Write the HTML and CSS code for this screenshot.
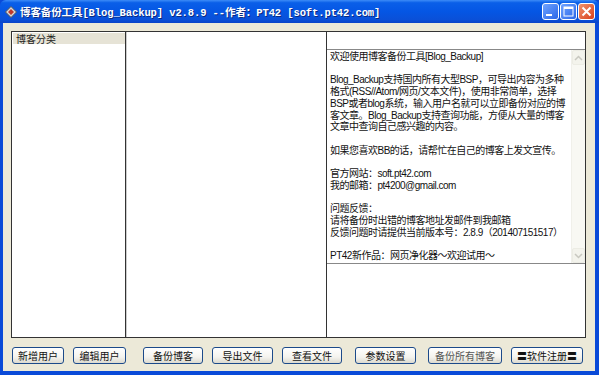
FILE: index.html
```html
<!DOCTYPE html>
<html>
<head>
<meta charset="utf-8">
<link rel="stylesheet" href="styles.css">
</head>
<body>
<div class="window">
  <div class="titlebar">
    <svg class="appicon" width="12" height="12" viewBox="0 0 12 12">
      <polygon points="6,0.5 11.5,6 6,11.5 0.5,6" fill="#d8d8d8" stroke="#555" stroke-width="1"/>
      <polygon points="6,3 9,6 6,9 3,6" fill="#c0392b"/>
    </svg>
    <span class="title">博客备份工具[Blog_Backup] v2.8.9 --作者：PT42 [soft.pt42.com]</span>
    <div class="ctrls">
      <div class="cbtn"><svg width="17" height="17" viewBox="0 0 17 17"><rect x="4" y="11" width="6" height="2" fill="#fff"/></svg></div>
      <div class="cbtn"><svg width="17" height="17" viewBox="0 0 17 17"><rect x="4" y="4" width="9" height="9" fill="none" stroke="#fff" stroke-width="1"/><rect x="4" y="4" width="9" height="2" fill="#fff"/></svg></div>
      <div class="cbtn close"><svg width="17" height="17" viewBox="0 0 17 17"><path d="M4.5 4.5 L12.5 12.5 M12.5 4.5 L4.5 12.5" stroke="#fff" stroke-width="2"/></svg></div>
    </div>
  </div>
  <div class="client">
    <div class="panels">
      <div class="col left">
        <div class="listhead">博客分类</div>
      </div>
      <div class="col mid"></div>
      <div class="col right">
        <div class="rtop"></div>
        <div class="memo">
          <div class="memotext">欢迎使用博客备份工具[Blog_Backup]<br><br>Blog_Backup支持国内所有大型BSP，可导出内容为多种<br>格式(RSS//Atom/网页/文本文件)，使用非常简单，选择<br>BSP或者blog系统，输入用户名就可以立即备份对应的博<br>客文章。Blog_Backup支持查询功能，方便从大量的博客<br>文章中查询自己感兴趣的内容。<br><br>如果您喜欢BB的话，请帮忙在自己的博客上发文宣传。<br><br>官方网站：soft.pt42.com<br>我的邮箱：pt4200@gmail.com<br><br>问题反馈：<br>请将备份时出错的博客地址发邮件到我邮箱<br>反馈问题时请提供当前版本号：2.8.9（201407151517）<br><br>PT42新作品：网页净化器～欢迎试用～</div>
          <div class="vscroll">
            <div class="sbtn"><svg width="9" height="6" viewBox="0 0 9 6"><path d="M1 5 L4.5 1.5 L8 5" fill="none" stroke="#c8c8c0" stroke-width="1.5"/></svg></div>
            <div class="strack"></div>
            <div class="sbtn"><svg width="9" height="6" viewBox="0 0 9 6"><path d="M1 1 L4.5 4.5 L8 1" fill="none" stroke="#c8c8c0" stroke-width="1.5"/></svg></div>
          </div>
        </div>
        <div class="rbottom"></div>
      </div>
    </div>
    <div class="buttons">
      <button class="btn b1">新增用户</button>
      <button class="btn b2">编辑用户</button>
      <button class="btn b3">备份博客</button>
      <button class="btn b4">导出文件</button>
      <button class="btn b5">查看文件</button>
      <button class="btn b6">参数设置</button>
      <button class="btn b7 dim">备份所有博客</button>
      <button class="btn b8">〓软件注册〓</button>
    </div>
  </div>
</div>
</body>
</html>
```

FILE: styles.css
```css
html, body {
  margin: 0;
  padding: 0;
  width: 599px;
  height: 375px;
  overflow: hidden;
}
.window {
  width: 599px;
  height: 375px;
  background: #0a4ad8;
  display: flex;
  flex-direction: column;
  box-sizing: border-box;
}
.titlebar {
  height: 23px;
  flex: none;
  display: flex;
  align-items: center;
  background: linear-gradient(to bottom, #3d8cf7 0%, #0a5fe8 12%, #0556e4 50%, #0a50d8 85%, #0a44c8 100%);
  border-radius: 6px 6px 0 0;
  padding-left: 5px;
  box-sizing: border-box;
}
.appicon {
  flex: none;
  margin-right: 3px;
}
.title {
  font-family: "Liberation Mono", "Noto Sans CJK SC", monospace;
  font-weight: bold;
  font-size: 10.5px;
  color: #fff;
  text-shadow: 1px 1px 0 #0a2a80;
  white-space: nowrap;
  letter-spacing: -0.1px;
}
.ctrls {
  margin-left: auto;
  display: flex;
  gap: 1px;
  margin-right: 4px;
}
.cbtn {
  width: 17px;
  height: 17px;
  border: 1px solid #fff;
  border-radius: 3px;
  box-sizing: border-box;
  background: linear-gradient(to bottom right, #6fa3ff, #2a66e8);
  display: flex;
  align-items: center;
  justify-content: center;
  overflow: hidden;
}
.cbtn svg { flex: none; }
.cbtn.close {
  background: linear-gradient(to bottom right, #f0936e, #d8401c);
}
.client {
  flex: 1;
  margin: 0 4px 4px 3px;
  background: #ece9d8;
  padding: 8px 0 0 8px;
  box-sizing: border-box;
  display: flex;
  flex-direction: column;
}
.panels {
  width: 575px;
  height: 307px;
  display: flex;
  border: 1px solid #333;
  box-sizing: border-box;
  background: #fff;
}
.col {
  box-sizing: border-box;
}
.left {
  flex: none;
  width: 114px;
  border-right: 1px solid #333;
  padding: 1px 0 0 1px;
}
.listhead {
  width: 112px;
  height: 11px;
  background: #e6e3d6;
  font-family: "Noto Sans CJK SC", sans-serif;
  font-size: 10px;
  line-height: 11px;
  color: #222;
  padding-left: 3px;
  box-sizing: border-box;
}
.mid {
  flex: none;
  width: 201px;
  border-right: 1px solid #333;
  box-shadow: inset 1px 0 0 #ccc;
}
.right {
  flex: 1;
  min-width: 0;
  display: flex;
  flex-direction: column;
}
.rtop {
  height: 17px;
  border-bottom: 1px solid #888;
}
.memo {
  height: 214px;
  display: flex;
  border-bottom: 1px solid #888;
  box-sizing: border-box;
}
.memotext {
  flex: 1;
  min-width: 0;
  padding: 1px 0 0 3px;
  font-family: "Liberation Sans", "Noto Sans CJK SC", sans-serif;
  font-size: 10px;
  line-height: 11.7px;
  color: #111;
  white-space: nowrap;
  overflow: hidden;
  letter-spacing: -0.5px;
}
.vscroll {
  width: 13px;
  flex: none;
  display: flex;
  flex-direction: column;
  background: #f8f8f3;
  border-left: 1px solid #f0f0ea;
}
.sbtn {
  height: 15px;
  background: #f3f3ec;
  border: 1px solid #ecece4;
  border-radius: 2px;
  box-sizing: border-box;
  display: flex;
  align-items: center;
  justify-content: center;
}
.strack { flex: 1; }
.rbottom { flex: 1; }
.buttons {
  display: flex;
  margin-top: 9px;
  margin-left: 1px;
}
.btn {
  height: 17px;
  padding: 0;
  border: 1px solid #1c4a8a;
  border-radius: 3px;
  background: linear-gradient(to bottom, #ffffff 0%, #f4f3ee 60%, #dcdad0 100%);
  font-family: "Noto Sans CJK SC", sans-serif;
  font-size: 10px;
  line-height: 15px;
  color: #111;
  box-sizing: border-box;
}
.b1 { width: 52px; }
.b2 { width: 53px; margin-left: 9px; }
.b3 { width: 60px; margin-left: 17px; }
.b4 { width: 61px; margin-left: 9px; }
.b5 { width: 60px; margin-left: 9px; }
.b6 { width: 61px; margin-left: 13px; }
.b7 { width: 74px; margin-left: 12px; }
.b8 { width: 72px; margin-left: 9px; }
.dim { color: #555; }
```
